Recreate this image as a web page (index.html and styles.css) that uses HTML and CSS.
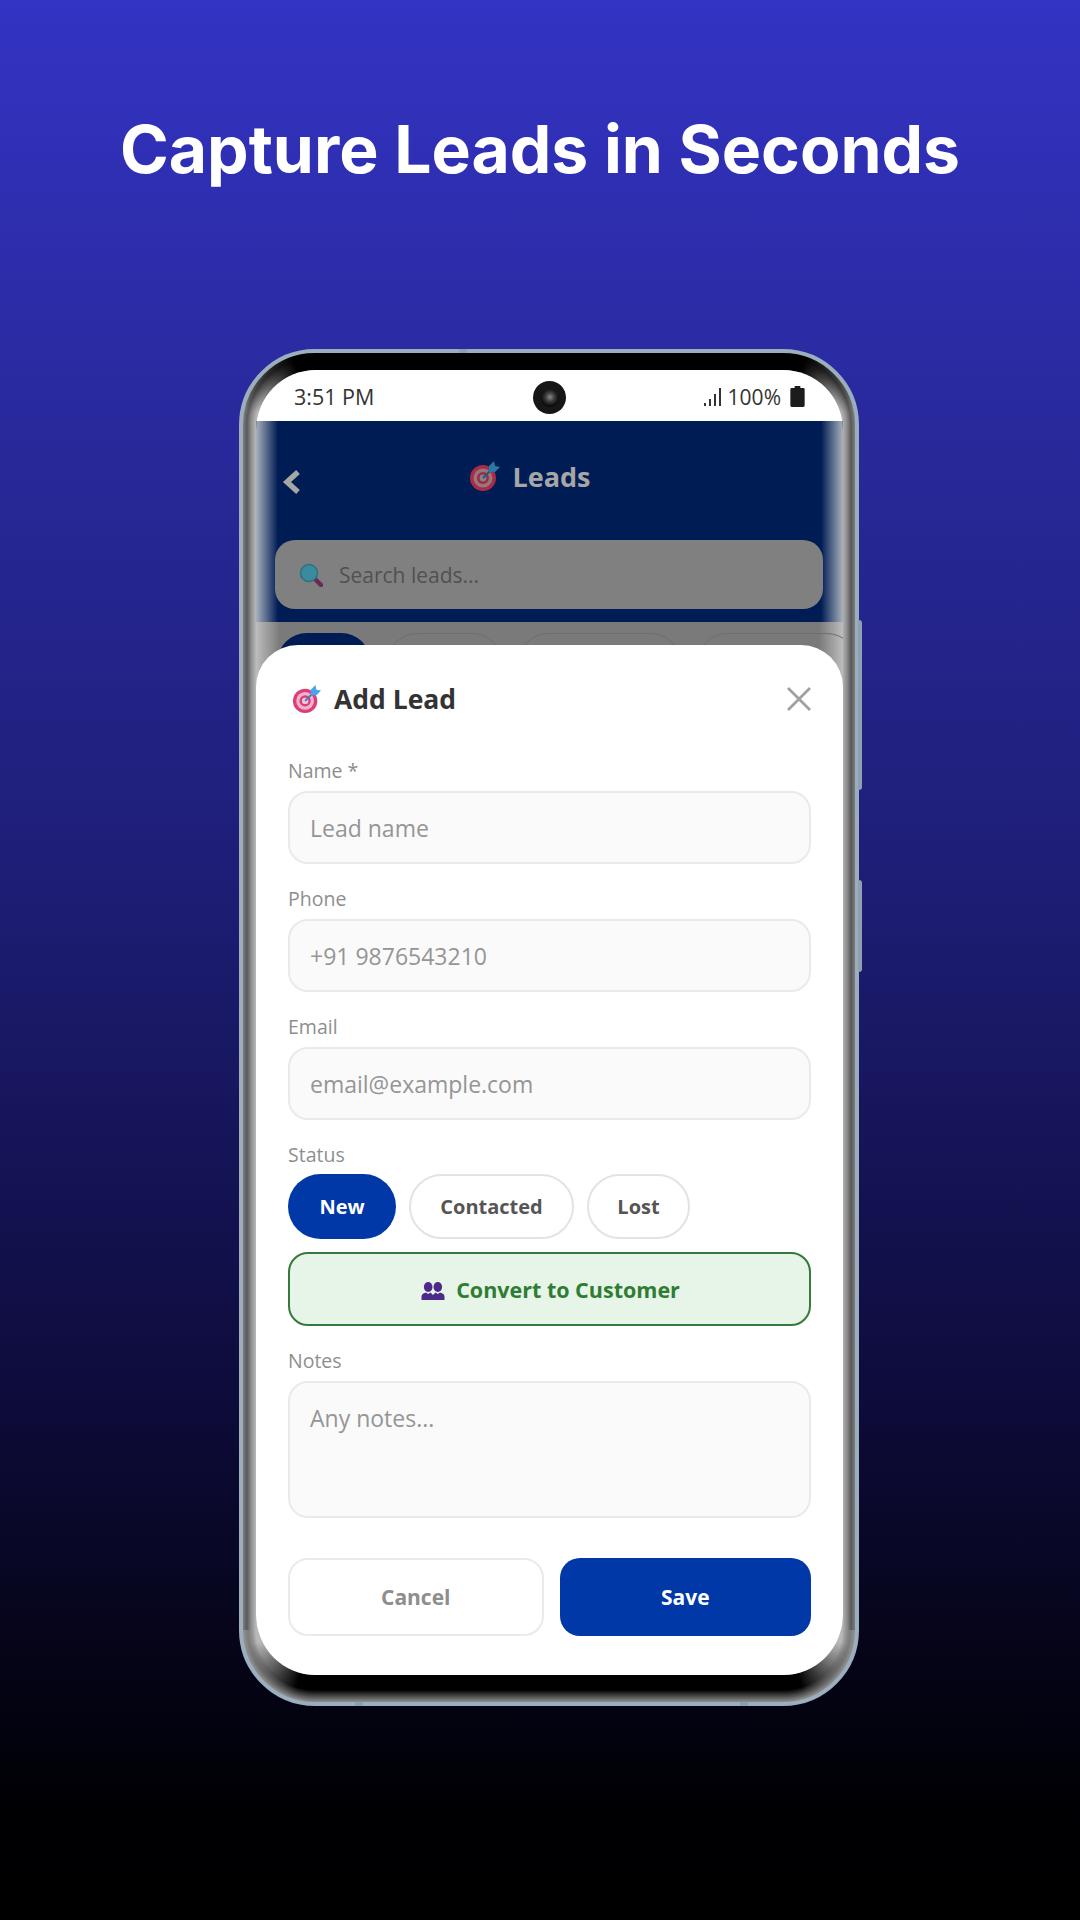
FILE: index.html
```html
<!DOCTYPE html>
<html lang="en">
<head>
    <meta charset="UTF-8">
    <meta name="viewport" content="width=device-width, initial-scale=1.0">
    <link rel="stylesheet" href="styles.css">
    <title>Capture Leads in Seconds</title>
</head>
<body>
    <svg class="icon-defs" width="0" height="0">
        <symbol id="target" viewBox="0 0 32 32">
            <circle cx="14" cy="18" r="13" fill="#dc3f78"/>
            <circle cx="14" cy="18" r="9.5" fill="#f1b2cd"/>
            <circle cx="14" cy="18" r="6" fill="#d83f78"/>
            <circle cx="14" cy="18" r="3.4" fill="#f3c4d9"/>
            <path d="M14 18 L24 8" stroke="#3a7fc0" stroke-width="2"/>
            <path d="M20 6 L25 1 L26 6 L31 7 L26 12 L20 12 Z" fill="#48a6ee"/>
        </symbol>
        <symbol id="target-dim" viewBox="0 0 32 32">
            <circle cx="14" cy="18" r="13" fill="#a82c44"/>
            <circle cx="14" cy="18" r="9.5" fill="#94767f"/>
            <circle cx="14" cy="18" r="6" fill="#a02a42"/>
            <circle cx="14" cy="18" r="3.4" fill="#8c7f88"/>
            <path d="M14 18 L24 8" stroke="#1c5a80" stroke-width="2"/>
            <path d="M20 6 L25 1 L26 6 L31 7 L26 12 L20 12 Z" fill="#2a78a8"/>
        </symbol>
    </svg>

    <h1 class="headline">Capture Leads in Seconds</h1>

    <div class="phone">
        <span class="side-key key-power"></span>
        <span class="side-key key-volume"></span>
        <span class="band band-top"></span>
        <span class="band band-left"></span>
        <span class="band band-right"></span>

        <div class="screen">
            <div class="status-bar">
                <span class="clock">3:51 PM</span>
                <span class="camera"><span class="lens"></span></span>
                <span class="status-right">
                    <svg class="signal" viewBox="0 0 18 18">
                        <rect x="0" y="15" width="2" height="3" fill="#333"/>
                        <rect x="5" y="11" width="2" height="7" fill="#333"/>
                        <rect x="10" y="6" width="2" height="12" fill="#333"/>
                        <rect x="15" y="0" width="2" height="18" fill="#333"/>
                    </svg>
                    <span>100%</span>
                    <svg class="battery" viewBox="0 0 15 22">
                        <path d="M4.500 0 H10.500 V2 H13.500 Q15 2 15 3.500 V20.500 Q15 22 13.500 22 H1.500 Q0 22 0 20.500 V3.500 Q0 2 1.500 2 H4.500 Z" fill="#1c1c1c"/>
                    </svg>
                </span>
            </div>

            <!-- page behind the sheet, dimmed -->
            <div class="leads-page">
                <div class="leads-header">
                    <div class="leads-title-row">
                        <svg class="chevron" viewBox="0 0 20 26">
                            <path d="M17 3 L6 13 L17 23" fill="none" stroke="#a6a6a6" stroke-width="5.500"/>
                        </svg>
                        <div class="leads-title">
                            <svg class="target-small"><use href="#target-dim"/></svg>
                            <span>Leads</span>
                        </div>
                    </div>
                    <div class="search-box">
                        <svg class="search-icon" viewBox="0 0 24 24">
                            <path d="M14 14 L22 22" stroke="#6a2a55" stroke-width="4.500" stroke-linecap="round"/>
                            <circle cx="10" cy="10" r="8.500" fill="#3a8c9c" stroke="#2c6f86" stroke-width="1.500"/>
                        </svg>
                        <span>Search leads...</span>
                    </div>
                </div>
                <div class="filter-row">
                    <span class="filter-chip filter-active"></span>
                    <span class="filter-chip filter-a"></span>
                    <span class="filter-chip filter-b"></span>
                    <span class="filter-chip filter-c"></span>
                </div>
            </div>

            <div class="sheet">
                <div class="sheet-header">
                    <svg class="target-large"><use href="#target"/></svg>
                    <h2>Add Lead</h2>
                    <svg class="close-icon" viewBox="0 0 24 24">
                        <path d="M1 1 L23 23 M23 1 L1 23" stroke="#a0a0a0" stroke-width="2.800" fill="none"/>
                    </svg>
                </div>

                <label class="field-label">Name *</label>
                <input class="text-input" type="text" placeholder="Lead name">

                <label class="field-label">Phone</label>
                <input class="text-input" type="text" placeholder="+91 9876543210">

                <label class="field-label">Email</label>
                <input class="text-input" type="text" placeholder="email@example.com">

                <label class="field-label status-label">Status</label>
                <div class="status-row">
                    <button class="status-chip status-new">New</button>
                    <button class="status-chip status-contacted">Contacted</button>
                    <button class="status-chip status-lost">Lost</button>
                </div>

                <button class="convert-button">
                    <svg class="people-icon" viewBox="0 0 24 18">
                        <ellipse cx="7.200" cy="5" rx="4.300" ry="5" fill="#4c2a8c"/>
                        <ellipse cx="16.800" cy="5" rx="4.300" ry="5" fill="#4c2a8c"/>
                        <path d="M0.500 18 V14.500 Q0.500 11.500 5 10.500 L7.200 12 L9.500 10.500 L12 13 L14.500 10.500 L16.800 12 L19 10.500 Q23.500 11.500 23.500 14.500 V18 Z" fill="#4c2a8c"/>
                    </svg>
                    <span>Convert to Customer</span>
                </button>

                <label class="field-label">Notes</label>
                <textarea class="text-input notes-input" placeholder="Any notes..."></textarea>

                <div class="action-row">
                    <button class="action-button cancel-button">Cancel</button>
                    <button class="action-button save-button">Save</button>
                </div>
            </div>
        </div>
    </div>
</body>
</html>
```

FILE: styles.css
```css
* {
    box-sizing: border-box;
}

body {
    margin: 0;
    width: 1080px;
    height: 1920px;
    overflow: hidden;
    font-family: "Open Sans", "Noto Sans", sans-serif;
    background: linear-gradient(to bottom, #3333c4 0%, #2a2aa0 20%, #1e1e78 45%, #0e0c3c 72%, #000004 94%, #000 100%);
}

.icon-defs {
    position: absolute;
}

.headline {
    margin: 0;
    padding-top: 106px;
    height: 349px;
    text-align: center;
    color: #fff;
    font-family: Inter, "Open Sans", sans-serif;
    font-size: 66px;
    font-weight: 700;
    line-height: 86px;
}

/* device frame: corners fade from the grey side bands into the black top and bottom */
.phone {
    position: relative;
    width: 620px;
    height: 1357px;
    margin-left: 239px;
    padding: 17px 12px 27px 13px;
    border: 4px solid #9aaebd;
    border-radius: 76px;
    background-image:
        radial-gradient(circle at 100% 0, rgba(143, 143, 143, 0) 60px, #8f8f8f 72px),
        radial-gradient(circle at 0 0, rgba(143, 143, 143, 0) 60px, #8f8f8f 72px),
        conic-gradient(from 270deg at 100% 100%, rgba(0, 0, 0, 0) 12deg, #000 72deg),
        conic-gradient(from 0deg at 0 100%, #000 18deg, rgba(0, 0, 0, 0) 78deg),
        conic-gradient(from 180deg at 100% 0, #000 18deg, rgba(0, 0, 0, 0) 78deg),
        conic-gradient(from 90deg at 0 0, rgba(0, 0, 0, 0) 12deg, #000 72deg),
        radial-gradient(circle at 100% 100%, #b9b9b9 59px, #8c8c8c 64px, #5a5a5a 68px, #7c7c7c 72px),
        radial-gradient(circle at 0 100%, #b9b9b9 59px, #8c8c8c 64px, #5a5a5a 68px, #7c7c7c 72px),
        radial-gradient(circle at 100% 0, #b9b9b9 59px, #8c8c8c 64px, #5a5a5a 68px, #7c7c7c 72px),
        radial-gradient(circle at 0 0, #b9b9b9 59px, #8c8c8c 64px, #5a5a5a 68px, #7c7c7c 72px),
        linear-gradient(#000, #000),
        linear-gradient(to top, #8f8f8f 0, #000 12px),
        linear-gradient(to right, #7c7c7c 0, #5a5a5a 4px, #8c8c8c 8px, #b9b9b9 13px, #b9b9b9 calc(100% - 13px), #8c8c8c calc(100% - 8px), #5a5a5a calc(100% - 4px), #7c7c7c 100%);
    background-size:
        72px 72px, 72px 72px,
        72px 72px, 72px 72px, 72px 72px, 72px 72px,
        72px 72px, 72px 72px, 72px 72px, 72px 72px,
        100% 30px, 100% 30px, 100% 100%;
    background-position:
        0 100%, 100% 100%,
        0 0, 100% 0, 0 100%, 100% 100%,
        0 0, 100% 0, 0 100%, 100% 100%,
        0 0, 0 100%, 0 0;
    background-repeat: no-repeat;
}

.side-key {
    position: absolute;
    right: -7px;
    width: 4px;
    background: #8ea0b2;
    border-radius: 0 3px 3px 0;
}

.key-power {
    top: 267px;
    height: 170px;
}

.key-volume {
    top: 527px;
    height: 92px;
}

.band {
    position: absolute;
    background: #8aa0b4;
}

.band-top {
    top: -4px;
    left: 216px;
    width: 8px;
    height: 4px;
}

.band-left {
    bottom: -4px;
    left: 112px;
    width: 8px;
    height: 4px;
}

.band-right {
    bottom: -4px;
    left: 497px;
    width: 8px;
    height: 4px;
}

.screen {
    position: relative;
    height: 100%;
    overflow: hidden;
    border-radius: 60px;
    background: #7a7a7a;
}

.status-bar {
    position: relative;
    display: flex;
    align-items: center;
    justify-content: space-between;
    height: 51px;
    padding: 2px 38px 0 38px;
    background: #fff;
    color: #333;
    font-size: 21px;
}

.clock {
    font-size: 21.5px;
}

.camera {
    position: absolute;
    left: 277px;
    top: 11px;
    display: flex;
    align-items: center;
    justify-content: center;
    width: 33px;
    height: 33px;
    border-radius: 50%;
    background: #161616;
}

.lens {
    width: 18px;
    height: 18px;
    border-radius: 50%;
    background: radial-gradient(circle at 50% 45%, #8a8a8a 0, #3a3a3a 35%, #000 75%);
}

.status-right {
    display: flex;
    align-items: center;
    gap: 6px;
}

.signal {
    width: 18px;
    height: 18px;
}

.battery {
    width: 15px;
    height: 21px;
    margin-left: 3px;
}

.leads-header {
    height: 201px;
    padding: 0 20px 0 19px;
    background:
        linear-gradient(to right, #a9b2bd 0, rgba(0, 28, 84, 0) 22px, rgba(0, 28, 84, 0) calc(100% - 22px), #a9b2bd 100%),
        #001c54;
}

.leads-title-row {
    position: relative;
    display: flex;
    align-items: center;
    justify-content: center;
    height: 119px;
    padding: 0 0 9px 0;
    color: #a6a6a6;
}

.chevron {
    position: absolute;
    left: 6px;
    top: 48px;
    width: 20px;
    height: 26px;
}

.leads-title {
    display: flex;
    align-items: center;
    gap: 11px;
    margin-left: -38px;
    font-size: 27px;
    font-weight: 700;
}

.target-small {
    width: 32px;
    height: 32px;
}

.search-box {
    display: flex;
    align-items: center;
    gap: 16px;
    height: 69px;
    padding: 0 24px;
    border-radius: 20px;
    background: #808080;
    color: #515151;
    font-size: 21px;
}

.search-icon {
    width: 24px;
    height: 24px;
}

.filter-row {
    display: flex;
    gap: 16px;
    padding: 11px 0 0 21px;
    background: linear-gradient(to right, #bdbdbd 0, #7a7a7a 24px, #7a7a7a calc(100% - 24px), #bdbdbd 100%);
    height: 80px;
}

.filter-chip {
    flex: none;
    height: 60px;
    border: 1px solid #6e6e6e;
    border-radius: 34px;
}

.filter-active {
    width: 94px;
    background: #001c54;
    border: none;
}

.filter-a {
    width: 115px;
}

.filter-b {
    width: 163px;
}

.filter-c {
    width: 160px;
}

/* bottom sheet */
.sheet {
    position: absolute;
    left: 0;
    right: 0;
    bottom: 0;
    height: 1030px;
    padding: 34px 32px 39px;
    border-radius: 42px 42px 0 0;
    background: #fff;
}

.sheet-header {
    display: flex;
    align-items: center;
    height: 40px;
    margin-bottom: 40px;
    padding-left: 4px;
}

.sheet-header h2 {
    flex: 1;
    margin: 0 0 0 12px;
    color: #333;
    font-size: 26.5px;
    font-weight: 700;
}

.target-large {
    width: 30px;
    height: 30px;
}

.close-icon {
    width: 24px;
    height: 24px;
}

.field-label {
    display: block;
    height: 24px;
    margin-bottom: 8px;
    color: #8e8e8e;
    font-size: 19.5px;
    line-height: 24px;
}

.text-input {
    display: block;
    width: 100%;
    height: 73px;
    margin-bottom: 23px;
    padding: 0 20px;
    border: 2px solid #eaeaea;
    border-radius: 20px;
    outline: none;
    background: #fafafa;
    font-family: inherit;
    font-size: 23px;
    color: #333;
}

.text-input::placeholder {
    color: #959595;
    opacity: 1;
}

.status-label {
    margin-bottom: 7px;
}

.status-row {
    display: flex;
    gap: 13px;
    margin-bottom: 13px;
}

.status-chip {
    height: 65px;
    padding: 0;
    border: 2px solid #e3e3e3;
    border-radius: 33px;
    background: #fff;
    color: #555;
    font-family: inherit;
    font-size: 20px;
    font-weight: 700;
}

.status-new {
    width: 108px;
    border: none;
    background: #0038a8;
    color: #fff;
}

.status-contacted {
    width: 165px;
}

.status-lost {
    width: 103px;
}

.convert-button {
    display: flex;
    align-items: center;
    justify-content: center;
    gap: 11px;
    width: 100%;
    height: 74px;
    margin-bottom: 23px;
    border: 2px solid #357a3a;
    border-radius: 20px;
    background: #e7f4e8;
    color: #2e7d32;
    font-family: inherit;
    font-size: 21.5px;
    font-weight: 700;
}

.people-icon {
    width: 24px;
    height: 18px;
    margin: 3px 0 0 2px;
}

.notes-input {
    height: 137px;
    margin-bottom: 40px;
    padding-top: 19px;
    resize: none;
}

.action-row {
    display: flex;
    gap: 16px;
}

.action-button {
    flex: 1;
    height: 78px;
    border-radius: 20px;
    font-family: inherit;
    font-size: 21px;
    font-weight: 700;
}

.cancel-button {
    border: 2px solid #eaeaea;
    background: #fff;
    color: #8e8e8e;
}

.save-button {
    border: none;
    background: #0038a8;
    color: #fff;
}
```
